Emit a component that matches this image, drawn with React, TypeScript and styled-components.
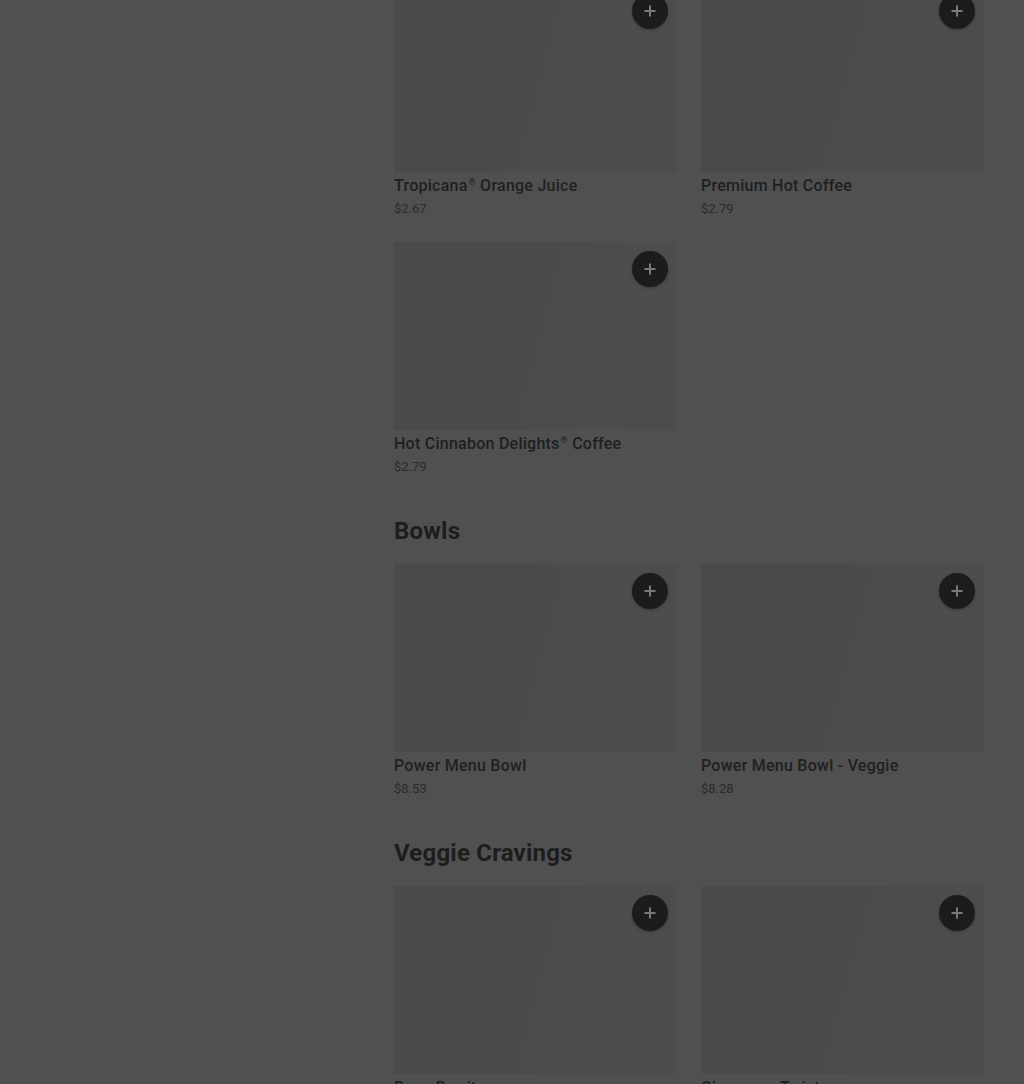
import React, { ReactElement } from "react";
import styled, { createGlobalStyle } from "styled-components";

const GlobalStyle = createGlobalStyle`
  html, body {
    margin: 0;
    padding: 0;
    background: #505050;
  }
  body {
    font-family: Roboto, "Liberation Sans", Arial, sans-serif;
    overflow: hidden;
  }
`;

export const Page = styled.div`
  display: flex;
  justify-content: flex-end;
  padding-right: 40px;
  min-height: 1084px;
  background: #505050;
`;

export const Menu = styled.main`
  width: 590px;
  margin-top: -16px;
`;

export const Section = styled.section`
  & + & {
    margin-top: 38px;
  }
`;

export const SectionTitle = styled.h2`
  margin: 0 0 17px 0;
  font-family: Roboto, "Liberation Sans", Arial, sans-serif;
  font-size: 24px;
  line-height: 32px;
  font-weight: 700;
  letter-spacing: 0.2px;
  color: #1d1d1d;
`;

export const Grid = styled.div`
  display: grid;
  grid-template-columns: 283px 283px;
  column-gap: 24px;
  row-gap: 23px;
`;

export const Card = styled.div`
  display: flex;
  flex-direction: column;
`;

export const Thumb = styled.div`
  position: relative;
  height: 188px;
  background: linear-gradient(105deg, #4a4a4a 35%, #4d4d4d 75%, #4c4c4c 100%);
`;

export const AddButton = styled.button`
  position: absolute;
  top: 9px;
  right: 9px;
  width: 36px;
  height: 36px;
  padding: 0;
  border: 0;
  border-radius: 50%;
  background: #1c1c1c;
  box-shadow: 0 1px 3px rgba(0, 0, 0, 0.25);
  display: flex;
  align-items: center;
  justify-content: center;
  cursor: pointer;
`;

export const Name = styled.div`
  margin-top: 4px;
  font-size: 16px;
  line-height: 20px;
  font-weight: 500;
  letter-spacing: 0.25px;
  color: #202020;
`;

export const Reg = styled.sup`
  font-size: 9px;
  line-height: 0;
  vertical-align: 6px;
  margin-left: 1px;
`;

export const Price = styled.div`
  margin-top: 3px;
  font-size: 13px;
  line-height: 20px;
  font-weight: 400;
  color: #2b2b2b;
`;

type Item = { name: string; price: string };

const sections: { title?: string; items: Item[] }[] = [
  {
    items: [
      { name: "Tropicana® Orange Juice", price: "$2.67" },
      { name: "Premium Hot Coffee", price: "$2.79" },
      { name: "Hot Cinnabon Delights® Coffee", price: "$2.79" },
    ],
  },
  {
    title: "Bowls",
    items: [
      { name: "Power Menu Bowl", price: "$8.53" },
      { name: "Power Menu Bowl - Veggie", price: "$8.28" },
    ],
  },
  {
    title: "Veggie Cravings",
    items: [
      { name: "Bean Burrito", price: "$2.19" },
      { name: "Cinnamon Twists", price: "$1.49" },
    ],
  },
];

function PlusIcon(): ReactElement {
  return (
    <svg width="12" height="12" viewBox="0 0 12 12" fill="none">
      <path d="M6 0.5V11.5M0.5 6H11.5" stroke="#7a7a7a" strokeWidth="2" />
    </svg>
  );
}

function renderName(name: string): ReactElement[] {
  return name.split("®").map((part, i, arr) => (
    <React.Fragment key={i}>
      {part}
      {i < arr.length - 1 && <Reg>®</Reg>}
    </React.Fragment>
  ));
}

function MenuCard({ item }: { item: Item }): ReactElement {
  return (
    <Card>
      <Thumb>
        <AddButton type="button" aria-label={`Add ${item.name}`}>
          <PlusIcon />
        </AddButton>
      </Thumb>
      <Name>{renderName(item.name)}</Name>
      <Price>{item.price}</Price>
    </Card>
  );
}

export default function App(): ReactElement {
  return (
    <>
      <GlobalStyle />
      <Page>
        <Menu>
          {sections.map((section, i) => (
            <Section key={i}>
              {section.title && <SectionTitle>{section.title}</SectionTitle>}
              <Grid>
                {section.items.map((item) => (
                  <MenuCard key={item.name} item={item} />
                ))}
              </Grid>
            </Section>
          ))}
        </Menu>
      </Page>
    </>
  );
}
